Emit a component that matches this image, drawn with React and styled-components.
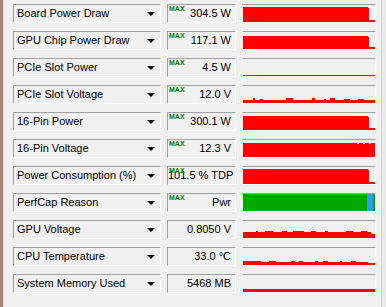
import React from 'react';
import styled, { createGlobalStyle } from 'styled-components';

const GlobalStyle = createGlobalStyle`
  html, body {
    margin: 0;
    padding: 0;
    background: #f0f0f0;
  }
  body {
    font-family: "Liberation Sans", Arial, sans-serif;
  }
`;

const GW = 132;
const GH = 17;

// small deterministic noise so the graphs look the same on every run
const rng = seed => {
  let s = seed;
  return () => {
    s = (s * 9301 + 49297) % 233280;
    return s / 233280;
  };
};

const fullLoad = top => x => {
  if (x < 125) return GH - top;
  if (x === 125) return GH - top - 1;
  return 2;
};

// bumps come in short runs of a few pixels, like the sampled sensor history
const noisy = (base, bumps, seed, tail) => {
  const r = rng(seed);
  const vals = [];
  let x = 0;
  while (x < GW) {
    const len = 2 + Math.floor(r() * 6);
    const n = r();
    let h = base;
    if (n > 0.82) h = base + bumps;
    else if (n > 0.6) h = base + 1;
    for (let i = 0; i < len && x < GW; i++, x++) {
      vals.push(tail && x >= tail.from ? tail.h : h);
    }
  }
  return x => vals[x];
};

const flat = h => () => h;

const stepPath = fn => {
  let d = `M0,${GH}`;
  for (let x = 0; x < GW; x++) {
    const y = GH - fn(x);
    d += ` L${x},${y} L${x + 1},${y}`;
  }
  return d + ` L${GW},${GH} Z`;
};

const sensors = [
  { name: 'Board Power Draw', value: '304.5 W', max: true, graph: fullLoad(2) },
  { name: 'GPU Chip Power Draw', value: '117.1 W', max: true, graph: fullLoad(4) },
  { name: 'PCIe Slot Power', value: '4.5 W', max: true, graph: flat(1) },
  { name: 'PCIe Slot Voltage', value: '12.0 V', max: true, graph: noisy(3, 2, 7, null) },
  { name: '16-Pin Power', value: '300.1 W', max: true, graph: fullLoad(3) },
  { name: '16-Pin Voltage', value: '12.3 V', max: true, graph: x => (x > 112 && x % 6 < 2 ? 13 : 14) },
  { name: 'Power Consumption (%)', value: '101.5 % TDP', max: true, graph: fullLoad(2) },
  { name: 'PerfCap Reason', value: 'Pwr', max: true, perfcap: true },
  { name: 'GPU Voltage', value: '0.8050 V', graph: noisy(6, 1, 13, { from: 128, h: 4 }) },
  { name: 'CPU Temperature', value: '33.0 °C', graph: noisy(3, 1, 29, { from: 125, h: 2 }) },
  { name: 'System Memory Used', value: '5468 MB', graph: flat(3) },
];

const Window = styled.div`
  display: flex;
  width: 386px;
  height: 307px;
  overflow: hidden;
  background: #f0f0f0;
`;

const LeftEdge = styled.div`
  width: 3px;
  background: #a88474;
  border-right: 1px solid #e4d8d2;
`;

const Panel = styled.div`
  display: flex;
  flex-direction: column;
  gap: 8px;
  padding: 4px 0 0 9px;
  width: 363px;
`;

const RightEdge = styled.div`
  margin-left: 5px;
  width: 4px;
  border-left: 1px solid #d4d4d4;
  background: #e9e9e9;
`;

const Row = styled.div`
  display: flex;
  gap: 6px;
  height: 19px;
`;

const Sunken = styled.div`
  box-sizing: border-box;
  height: 19px;
  border-top: 1px solid #a0a0a0;
  border-left: 1px solid #a0a0a0;
  border-right: 1px solid #ffffff;
  border-bottom: 1px solid #ffffff;
  background: #f0f0f0;
`;

const Combo = styled(Sunken)`
  position: relative;
  width: 148px;
  padding-left: 3px;
  font-size: 11px;
  line-height: 17px;
  color: #000;
  white-space: nowrap;
`;

const Arrow = styled.span`
  position: absolute;
  right: 5px;
  top: 7px;
  width: 0;
  height: 0;
  border-left: 4px solid transparent;
  border-right: 4px solid transparent;
  border-top: 4px solid #000;
`;

const ValueBox = styled(Sunken)`
  position: relative;
  width: 69px;
  padding-right: 4px;
  text-align: right;
  font-size: 11px;
  line-height: 17px;
  color: #000;
  white-space: nowrap;
`;

const MaxTag = styled.span`
  position: absolute;
  left: 1px;
  top: 0px;
  font-size: 7px;
  font-weight: bold;
  line-height: 8px;
  color: #008000;
`;

const GraphBox = styled(Sunken)`
  width: 134px;
  border-left-color: #f0f0f0;
  svg {
    display: block;
  }
`;

const Graph = ({ sensor }) => (
  <GraphBox>
    <svg width={GW} height={GH} viewBox={`0 0 ${GW} ${GH}`} shapeRendering="crispEdges">
      {sensor.perfcap ? (
        <>
          <rect x="0" y="0" width={GW} height={GH} fill="#00a800" />
          <rect x="124" y="0" width="6" height={GH} fill="#2d9cf0" />
        </>
      ) : (
        <path d={stepPath(sensor.graph)} fill="#ff0000" />
      )}
    </svg>
  </GraphBox>
);

export default function App() {
  return (
    <>
      <GlobalStyle />
      <Window>
        <LeftEdge />
        <Panel>
          {sensors.map(s => (
            <Row key={s.name}>
              <Combo>
                {s.name}
                <Arrow />
              </Combo>
              <ValueBox>
                {s.max && <MaxTag>MAX</MaxTag>}
                {s.value}
              </ValueBox>
              <Graph sensor={s} />
            </Row>
          ))}
        </Panel>
        <RightEdge />
      </Window>
    </>
  );
}
